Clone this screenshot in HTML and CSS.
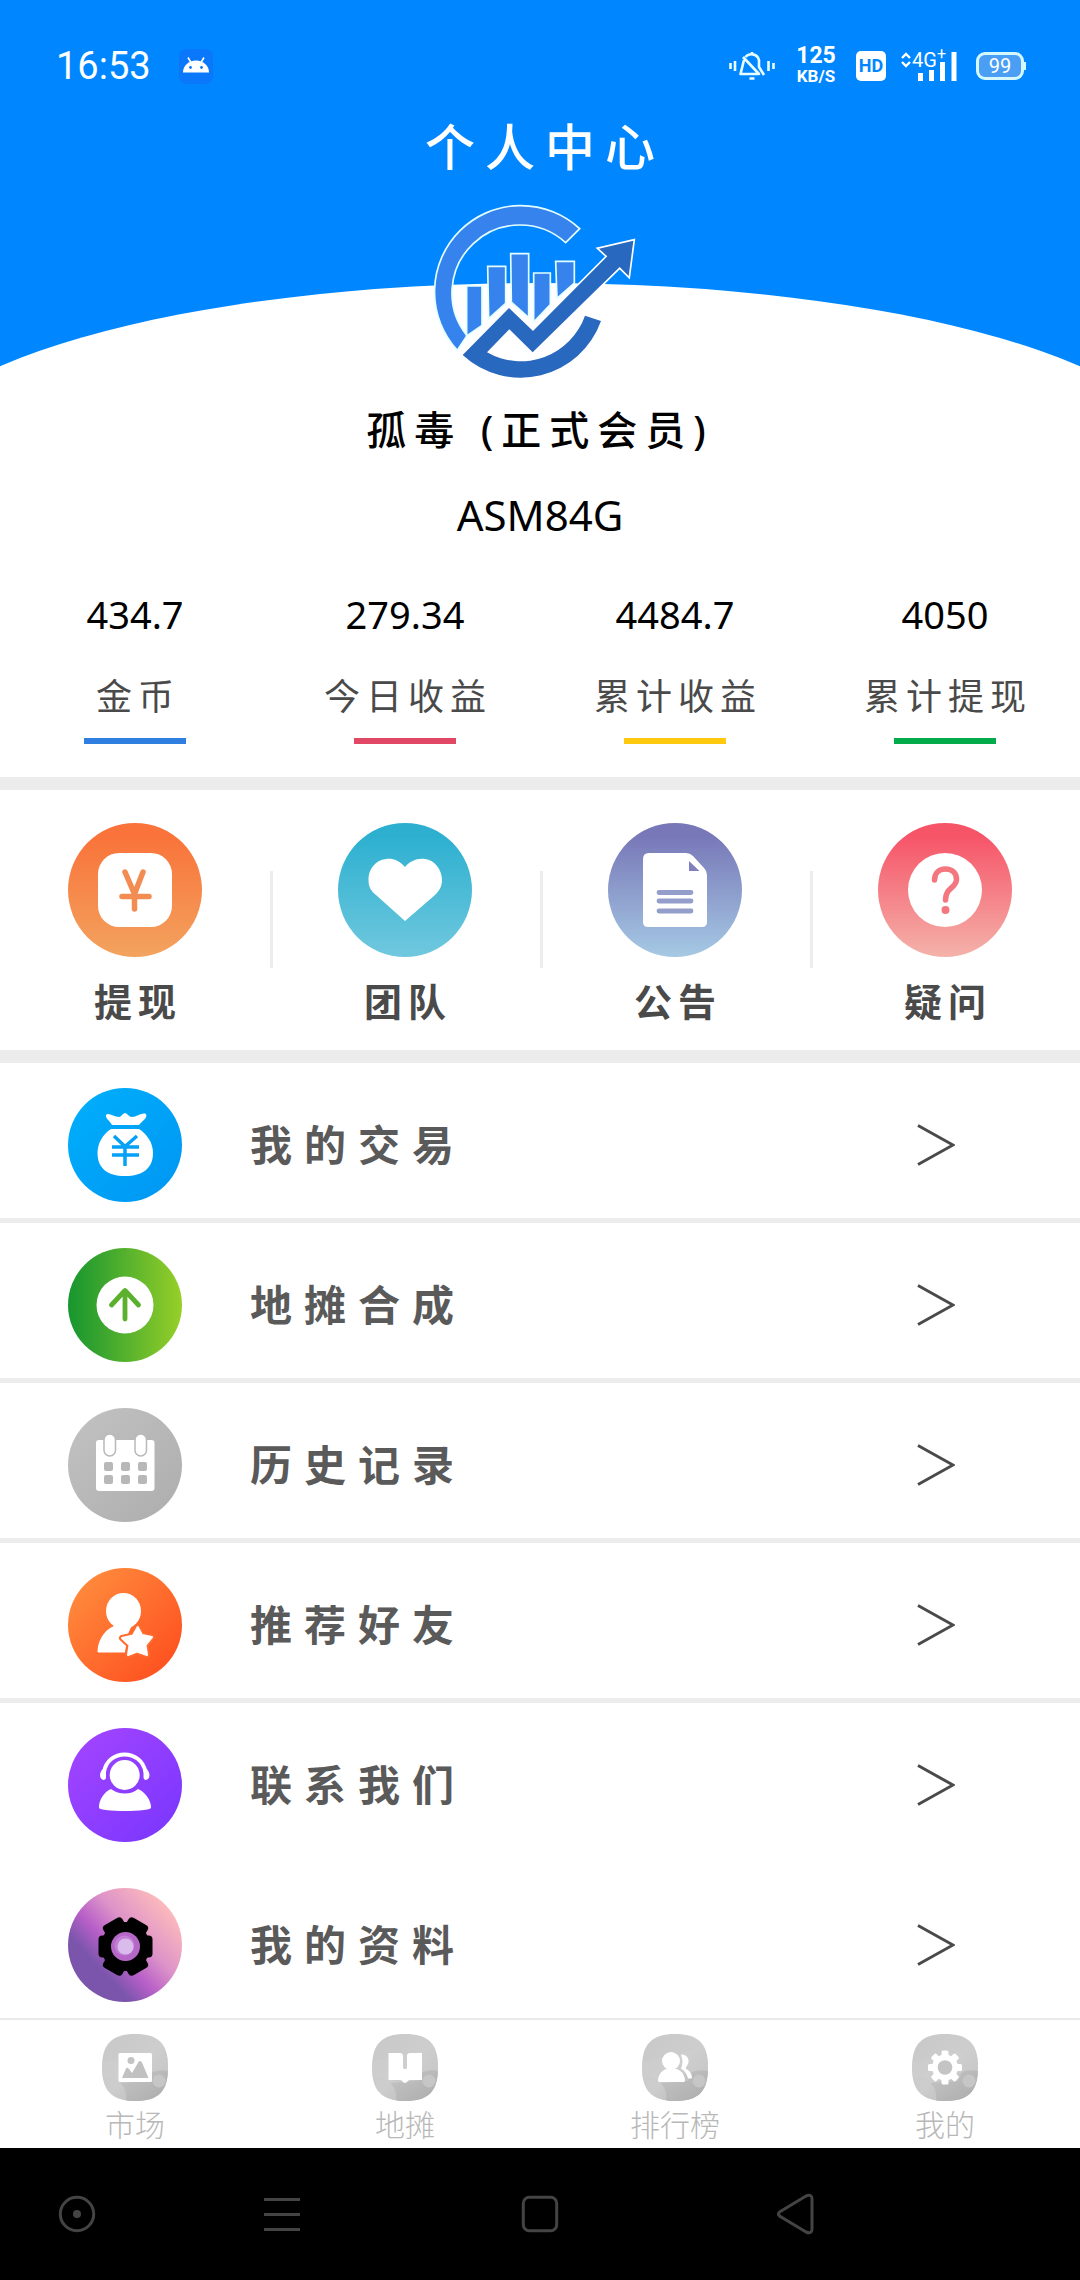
FILE: index.html
```html
<!DOCTYPE html>
<html lang="zh-CN">
<head>
  <meta charset="UTF-8">
  <meta name="viewport" content="width=device-width, initial-scale=1.0">
  <title>个人中心</title>
  <link rel="stylesheet" href="styles.css">
</head>
<body>

<!-- 公用渐变和底图 -->
<svg class="defs" aria-hidden="true">
  <defs>
    <linearGradient id="gOrange" x1="0" y1="0" x2="0" y2="1"><stop offset="0.1" stop-color="#f9733a"/><stop offset="1" stop-color="#f3a35f"/></linearGradient>
    <linearGradient id="gTeal" x1="0" y1="0" x2="0" y2="1"><stop offset="0.1" stop-color="#2db0d0"/><stop offset="1" stop-color="#70c8de"/></linearGradient>
    <linearGradient id="gViolet" x1="0" y1="0" x2="0" y2="1"><stop offset="0.1" stop-color="#7878b8"/><stop offset="1" stop-color="#a5c9e4"/></linearGradient>
    <linearGradient id="gRed" x1="0" y1="0" x2="0" y2="1"><stop offset="0.1" stop-color="#f65568"/><stop offset="1" stop-color="#f4b2aa"/></linearGradient>
    <linearGradient id="gBlue" x1="0" y1="0" x2="1" y2="1"><stop offset="0.1" stop-color="#00adfb"/><stop offset="0.9" stop-color="#0098f3"/></linearGradient>
    <linearGradient id="gGreen" x1="0" y1="0" x2="1" y2="0"><stop offset="0" stop-color="#17962f"/><stop offset="0.3" stop-color="#3aa52f"/><stop offset="1" stop-color="#97cf28"/></linearGradient>
    <linearGradient id="gGray" x1="0" y1="0" x2="1" y2="1"><stop offset="0.1" stop-color="#c0c0c0"/><stop offset="0.9" stop-color="#afafaf"/></linearGradient>
    <linearGradient id="gFriend" x1="0" y1="0" x2="1" y2="1"><stop offset="0.1" stop-color="#ff8b3d"/><stop offset="0.9" stop-color="#fe501f"/></linearGradient>
    <linearGradient id="gPurple" x1="0" y1="0" x2="1" y2="1"><stop offset="0.1" stop-color="#a044ff"/><stop offset="0.9" stop-color="#7d37fe"/></linearGradient>
    <linearGradient id="gProfile" x1="0.1" y1="0.85" x2="0.85" y2="0.15"><stop offset="0.22" stop-color="#7a55ab"/><stop offset="0.42" stop-color="#b75fc8"/><stop offset="0.65" stop-color="#dd93c8"/><stop offset="1" stop-color="#fcb9bc"/></linearGradient>
    <linearGradient id="gTab" x1="0" y1="0" x2="1" y2="1"><stop offset="0" stop-color="#c8c8c8"/><stop offset="0.5" stop-color="#cdcdcd"/><stop offset="1" stop-color="#b5b5b5"/></linearGradient>
    <linearGradient id="gTabDark" x1="0" y1="0" x2="1" y2="1"><stop offset="0" stop-color="#c6c6c6"/><stop offset="1" stop-color="#acacac"/></linearGradient>
    <clipPath id="tabClip"><path d="M33 0C56 0 66 9 66 33.500S56 67 33 67 0 57 0 33.500 10 0 33 0Z"/></clipPath>
    <symbol id="tabBg" viewBox="0 0 66 67">
      <g clip-path="url(#tabClip)">
        <rect width="66" height="67" fill="url(#gTab)"/>
        <path d="M0 44Q12 42 18 49L30 40H66V30L66 0Q60 16 36 20L0 28Z" fill="#cfcfcf" opacity=".5"/>
        <path d="M24 67C25 59 23 53 18 49L46 47 50 38Q58 35 66 37V67Z" fill="url(#gTabDark)"/>
        <circle cx="57" cy="47" r="6.500" fill="#c6c6c6"/>
      </g>
    </symbol>
  </defs>
</svg>

<header class="hero">
  <div class="status-bar">
    <span class="time">16:53</span>
    <svg class="android" viewBox="0 0 34 35" aria-hidden="true">
      <rect width="34" height="35" rx="7" fill="#0b78fb"/>
      <path d="M4 23.500a13 12 0 0 1 26 0Z" fill="#fff"/>
      <path d="M9 8.500l3 5M25 8.500l-3 5" stroke="#fff" stroke-width="1.600"/>
      <circle cx="11.500" cy="18.500" r="1.400" fill="#0b78fb"/><circle cx="22.500" cy="18.500" r="1.400" fill="#0b78fb"/>
    </svg>
    <svg class="mute" viewBox="0 0 46 32" fill="none" stroke="#e9ffff" stroke-width="2.600" aria-hidden="true">
      <path d="M1.500 13v6M6 11v10M39.500 11v10M44.500 13v6"/>
      <path d="M15 10L11.500 24H30L14 7M16.500 7C20 3 28 3 30 10V17L35 25M23 2v3M20.500 28.500h5" stroke-linejoin="round"/>
    </svg>
    <span class="speed"><b>125</b><b class="unit">KB/S</b></span>
    <span class="hd">HD</span>
    <span class="signal">
      <svg viewBox="0 0 58 32" aria-hidden="true">
        <path d="M2 8l4-4 4 4M2 12l4 4 4-4" fill="none" stroke="#fff" stroke-width="2.400"/>
        <path d="M20.500 23v8M31.500 20v11M42.500 12v19M54 2v29" stroke="#fff" stroke-width="5" stroke-linecap="butt"/>
      </svg>
      <span class="net">4G<sup>+</sup></span>
    </span>
    <span class="battery">99</span>
  </div>

  <h1 class="title">个人中心</h1>

  <svg class="logo" viewBox="90 60 660 549" role="img" aria-label="logo">
    <g fill="#3683ee" stroke="#e4ffff" stroke-width="5">
      <path d="M172 511A259 259 0 0 1 539 146L497 188A204 204 0 0 0 201 467Z"/>
      <path d="M200 318H246V436L200 468Z"/>
      <path d="M263 259H317V370L266 416Z"/>
      <path d="M332 221H386V413L334 366Z"/>
      <path d="M401 279H451V374L401 426Z"/>
      <path d="M467 244H523V309L471 355Z"/>
    </g>
    <path d="M188 525L327 384 399 453 622 229 597 206 700 182 686 288 659 261 398 517 328 448 261 517A204 204 0 0 0 555 407L603 423A256 256 0 0 1 188 525Z" fill="none" stroke="#fff" stroke-width="10"/>
    <path d="M188 525L327 384 399 453 622 229 597 206 700 182 686 288 659 261 398 517 328 448 261 517A204 204 0 0 0 555 407L603 423A256 256 0 0 1 188 525Z" fill="#2868bf"/>
  </svg>
</header>

<main>
  <section class="user">
    <p class="name">孤毒 (正式会员)</p>
    <p class="code">ASM84G</p>
  </section>

  <section class="stats">
    <div class="stat blue"><strong>434.7</strong><span>金币</span></div>
    <div class="stat red"><strong>279.34</strong><span>今日收益</span></div>
    <div class="stat yellow"><strong>4484.7</strong><span>累计收益</span></div>
    <div class="stat green"><strong>4050</strong><span>累计提现</span></div>
  </section>

  <section class="actions">
    <a class="action" href="#withdraw">
      <svg viewBox="0 0 134 134" aria-hidden="true">
        <circle cx="67" cy="67" r="67" fill="url(#gOrange)"/>
        <rect x="30" y="30" width="74" height="74" rx="21" fill="#fff"/>
        <path d="M57 49L66.500 71 75 49M66.500 71V86M54 73.500H81" fill="none" stroke="#f28c52" stroke-width="5.500" stroke-linecap="round" stroke-linejoin="round"/>
      </svg>
      <span>提现</span>
    </a>
    <a class="action" href="#team">
      <svg viewBox="0 0 134 134" aria-hidden="true">
        <circle cx="67" cy="67" r="67" fill="url(#gTeal)"/>
        <path d="M67 44C61 37 54 35 48 36 37 37 30 47 30.500 57 30.500 64 33 68 38 72L67 98 97 72C101 68 104 64 104 57 104 47 97 37 87 36 79 35 72 38 67 44Z" fill="#fff"/>
      </svg>
      <span>团队</span>
    </a>
    <a class="action" href="#notice">
      <svg viewBox="0 0 134 134" aria-hidden="true">
        <circle cx="67" cy="67" r="67" fill="url(#gViolet)"/>
        <path d="M41 30H78Q82 30 85 33L96 45Q99 48 99 52V99Q99 104 94 104H40Q35 104 35 99V36Q35 30 41 30Z" fill="#fff"/>
        <path d="M81 38V48H91.500Z" fill="#7f80bd"/>
        <path d="M51 69.500H83M51 78H83M51 88H83" stroke="#939ecb" stroke-width="4.800" stroke-linecap="round"/>
      </svg>
      <span>公告</span>
    </a>
    <a class="action" href="#question">
      <svg viewBox="0 0 134 134" aria-hidden="true">
        <circle cx="67" cy="67" r="67" fill="url(#gRed)"/>
        <circle cx="67" cy="67" r="37" fill="#fff"/>
        <path d="M56.500 57C56.500 50 61 46 67.500 46S78.500 50 78.500 56.500C78.500 65 67.500 64 67.500 77" fill="none" stroke="#f4777f" stroke-width="5.500" stroke-linecap="round"/>
        <circle cx="67.500" cy="87" r="4" fill="#f4777f"/>
      </svg>
      <span>疑问</span>
    </a>
  </section>

  <nav class="menu">
    <a class="menu-item" href="#trade">
      <svg class="menu-icon" viewBox="0 0 114 114" aria-hidden="true">
        <circle cx="57" cy="57" r="57" fill="url(#gBlue)"/>
        <path d="M44 37C42 33 37 30 38 27 40 24 46 29 51 29 53 29 55 25 57 25S61 29 64 29C69 29 74 24 78 26 80 30 74 33 71 37Z" fill="#fff"/>
        <path d="M43 41H71C79 46 85 55 85 65 85 80 75 88 57 88S29.500 80 29.500 65C29.500 55 35 46 43 41Z" fill="#fff"/>
        <path d="M46 48L57 58.500 69 48M57 58V78M44 59H71M44 67H71" fill="none" stroke="#05a1f6" stroke-width="3.500"/>
      </svg>
      <span>我的交易</span>
      <svg class="arrow" viewBox="0 0 38 42" aria-hidden="true"><path d="M1 1.500L36 21 1 40.500"/></svg>
    </a>
    <a class="menu-item" href="#compose">
      <svg class="menu-icon" viewBox="0 0 114 114" aria-hidden="true">
        <circle cx="57" cy="57" r="57" fill="url(#gGreen)"/>
        <circle cx="57" cy="57" r="28.500" fill="#fff"/>
        <path d="M57 43V71M43.500 57L57 42.500 70.500 57" fill="none" stroke="#5bb12e" stroke-width="4.800" stroke-linecap="round" stroke-linejoin="round"/>
      </svg>
      <span>地摊合成</span>
      <svg class="arrow" viewBox="0 0 38 42" aria-hidden="true"><path d="M1 1.500L36 21 1 40.500"/></svg>
    </a>
    <a class="menu-item" href="#history">
      <svg class="menu-icon" viewBox="0 0 114 114" aria-hidden="true">
        <circle cx="57" cy="57" r="57" fill="url(#gGray)"/>
        <rect x="28" y="32" width="58.500" height="51" rx="3" fill="#fff"/>
        <g fill="#fff" stroke="#b9b9b9" stroke-width="1.500"><rect x="36" y="26" width="11.500" height="22" rx="5.700"/><rect x="67" y="26" width="11.500" height="22" rx="5.700"/></g>
        <g fill="#b8b8b8">
          <rect x="36" y="54" width="9" height="9" rx="2"/><rect x="53" y="54" width="9" height="9" rx="2"/><rect x="70" y="54" width="9" height="9" rx="2"/>
          <rect x="36" y="67" width="9" height="9" rx="2"/><rect x="53" y="67" width="9" height="9" rx="2"/><rect x="70" y="67" width="9" height="9" rx="2"/>
        </g>
      </svg>
      <span>历史记录</span>
      <svg class="arrow" viewBox="0 0 38 42" aria-hidden="true"><path d="M1 1.500L36 21 1 40.500"/></svg>
    </a>
    <a class="menu-item" href="#invite">
      <svg class="menu-icon" viewBox="0 0 114 114" aria-hidden="true">
        <circle cx="57" cy="57" r="57" fill="url(#gFriend)"/>
        <ellipse cx="55.500" cy="43" rx="17.500" ry="18" fill="#fff"/>
        <path d="M46 58C35 63 30 73 29.500 83.500Q29.500 84.500 31 84.500H57L60 66 64 57Z" fill="#fff"/>
        <path d="M69.700 59L74 67 84 69 77.500 77 79 87 69 83.500 60 87 61.500 77 54 70 65 67.500Z" fill="#ff6a2d" stroke="#ff6a2d" stroke-width="6" stroke-linejoin="round"/>
        <path d="M69.700 59L74 67 84 69 77.500 77 79 87 69 83.500 60 87 61.500 77 54 70 65 67.500Z" fill="#fff" stroke="#fff" stroke-width="2" stroke-linejoin="round"/>
      </svg>
      <span>推荐好友</span>
      <svg class="arrow" viewBox="0 0 38 42" aria-hidden="true"><path d="M1 1.500L36 21 1 40.500"/></svg>
    </a>
    <a class="menu-item no-line" href="#contact">
      <svg class="menu-icon" viewBox="0 0 114 114" aria-hidden="true">
        <circle cx="57" cy="57" r="57" fill="url(#gPurple)"/>
        <circle cx="56.700" cy="47" r="15" fill="#fff"/>
        <path d="M36 44C40 20.500 73 20.500 77.500 44" fill="none" stroke="#fff" stroke-width="4"/>
        <path d="M38 38V49Q38 52 35.500 52 32 51 32 46.500 33 42 35 41ZM75.500 38V49Q75.500 52 78 52 81.500 51 81.500 46.500 80.500 42 78.500 41Z" fill="#fff"/>
        <path d="M43 61C36 64 31 72 31 79 31 81 33 81.500 38 82 50 83.300 64 83.300 76 82 81 81.500 83 81 83 79 83 72 77 64 70 61 63 67 51 67 43 61Z" fill="#fff"/>
      </svg>
      <span>联系我们</span>
      <svg class="arrow" viewBox="0 0 38 42" aria-hidden="true"><path d="M1 1.500L36 21 1 40.500"/></svg>
    </a>
    <a class="menu-item last" href="#profile">
      <svg class="menu-icon" viewBox="0 0 114 114" aria-hidden="true">
        <circle cx="57" cy="57" r="57" fill="url(#gProfile)"/>
        <g transform="translate(57.500 58.500)">
          <circle r="24.500"/>
          <rect x="-27" y="-11" width="54" height="22" rx="4"/>
          <rect x="-29" y="-11" width="58" height="22" rx="4" transform="rotate(60)"/>
          <rect x="-29" y="-11" width="58" height="22" rx="4" transform="rotate(120)"/>
          <circle r="14.500" fill="#b567c7"/>
          <circle cx="-1" cy="-1" r="10" fill="#c27fd3"/>
          <circle r="8" fill="#dabcec"/>
        </g>
      </svg>
      <span>我的资料</span>
      <svg class="arrow" viewBox="0 0 38 42" aria-hidden="true"><path d="M1 1.500L36 21 1 40.500"/></svg>
    </a>
  </nav>
</main>

<footer>
  <nav class="tabs">
    <a class="tab" href="#market">
      <svg viewBox="0 0 66 67" aria-hidden="true">
        <use href="#tabBg"/>
        <rect x="16.500" y="19" width="33.500" height="29" rx="1.500" fill="#fff"/>
        <circle cx="29" cy="26.500" r="3.500" fill="#c4c4c4"/>
        <path d="M20 44L24 34.500Q25.500 33 27 35L30 39 36.500 28Q38 26 40 28.500L46.500 44Z" fill="#c1c1c1"/>
      </svg>
      <span>市场</span>
    </a>
    <a class="tab" href="#stall">
      <svg viewBox="0 0 66 67" aria-hidden="true">
        <use href="#tabBg"/>
        <path d="M16.500 19H28Q31 19 31 22V33.500Q31 35 33 35T35 33.500V22Q35 19 38 19H50V46H38Q36 46 35 48 33 50 31 48 30 46 28 46H16.500Z" fill="#fff"/>
      </svg>
      <span>地摊</span>
    </a>
    <a class="tab" href="#rank">
      <svg viewBox="0 0 66 67" aria-hidden="true">
        <use href="#tabBg"/>
        <circle cx="29" cy="27" r="9" fill="#fff"/>
        <path d="M24 35H35C40 37 43 42 43 46.500Q43 48 41.500 48H17.500Q16 48 16 46.500C16 42 19 37 24 35Z" fill="#fff"/>
        <path d="M39 20.500C45 20 48 26 46 30 45 32 44 33 43.500 34.500 47 36 50 40 50 43.500Q50 44.500 49 44.500H46C45 40 43 37 39 34.500 41 30 41 26 39 20.500Z" fill="#fff"/>
      </svg>
      <span>排行榜</span>
    </a>
    <a class="tab" href="#mine">
      <svg viewBox="0 0 66 67" aria-hidden="true">
        <use href="#tabBg"/>
        <g transform="translate(33 33.500)" fill="#fff">
          <circle r="13"/>
          <rect x="-17" y="-3.500" width="34" height="7" rx="1.500"/>
          <rect x="-17" y="-3.500" width="34" height="7" rx="1.500" transform="rotate(45)"/>
          <rect x="-17" y="-3.500" width="34" height="7" rx="1.500" transform="rotate(90)"/>
          <rect x="-17" y="-3.500" width="34" height="7" rx="1.500" transform="rotate(135)"/>
          <circle r="7.300" fill="#c4c4c4"/>
        </g>
      </svg>
      <span>我的</span>
    </a>
  </nav>

  <!-- 系统导航键 -->
  <div class="sys-nav">
    <button type="button" aria-label="助手"><svg viewBox="0 0 40 40"><circle cx="20" cy="20" r="16.700"/><circle cx="20" cy="20" r="4" fill="#444" stroke="none"/></svg></button>
    <button type="button" aria-label="菜单"><svg viewBox="0 0 40 40"><path d="M2 5.500H38M2 20.500H38M2 35.500H38"/></svg></button>
    <button type="button" aria-label="主页"><svg viewBox="0 0 40 40"><rect x="3.300" y="3.300" width="33.400" height="33.400" rx="6"/></svg></button>
    <button type="button" aria-label="返回"><svg viewBox="0 0 40 40"><path d="M4.500 18L31 2Q37 -0.500 37 5V35Q37 40.500 31 38L4.500 22Q2.500 20 4.500 18Z"/></svg></button>
  </div>
</footer>

</body>
</html>
```
FILE: styles.css
```css
* {
  box-sizing: border-box;
}

html, body {
  margin: 0;
  padding: 0;
  background: #fff;
  font-family: "Noto Sans", "Noto Sans CJK SC", sans-serif;
}

body {
  display: flex;
  flex-direction: column;
  min-height: 100vh;
}

h1, p {
  margin: 0;
}

a {
  color: inherit;
  text-decoration: none;
}

svg {
  display: block;
  flex: none;
}

.defs {
  position: absolute;
  width: 0;
  height: 0;
}

/* 顶部蓝色区域 */
.hero {
  position: relative;
  overflow: hidden;
  padding-top: 48px;
  background: #0087ff;
  color: #fff;
}

.hero::after {
  content: "";
  position: absolute;
  top: 283px;
  left: -10%;
  width: 120%;
  height: 372px;
  border-radius: 50%;
  background: #fff;
}

.status-bar {
  display: flex;
  align-items: center;
  height: 36px;
  padding: 0 56px;
  font-family: Roboto, sans-serif;
}

.time {
  font-size: 38px;
  line-height: 40px;
}

.android {
  width: 34px;
  height: 35px;
  margin-left: 28px;
}

.mute {
  width: 46px;
  height: 32px;
  margin: 0 20px 0 auto;
}

.speed {
  display: flex;
  flex-direction: column;
  align-items: center;
  width: 42px;
  font-size: 23px;
  line-height: 20px;
}

.speed .unit {
  font-size: 17px;
}

.hd {
  width: 30px;
  height: 30px;
  margin-left: 19px;
  border-radius: 5px;
  background: #fff;
  color: #0087ff;
  font-size: 18px;
  font-weight: 700;
  line-height: 30px;
  text-align: center;
}

.signal {
  position: relative;
  margin-left: 14px;
}

.signal svg {
  width: 58px;
  height: 32px;
}

.net {
  position: absolute;
  top: 0;
  left: 12px;
  font-size: 20px;
  line-height: 20px;
}

.net sup {
  font-size: 16px;
  line-height: 0;
}

.battery {
  position: relative;
  width: 48px;
  height: 28px;
  margin-left: 18px;
  border: 3px solid #d5f8ff;
  border-radius: 9px;
  background: #4a9ff5;
  font-size: 20px;
  line-height: 22px;
  text-align: center;
}

.battery::after {
  content: "";
  position: absolute;
  top: 7px;
  right: -5px;
  width: 2px;
  height: 8px;
  background: #d5f8ff;
}

.title {
  margin-top: 30px;
  font-family: "Noto Sans CJK SC", sans-serif;
  font-size: 50px;
  font-weight: 500;
  line-height: 60px;
  letter-spacing: 10px;
  text-indent: 10px;
  text-align: center;
}

.logo {
  position: relative;
  z-index: 1;
  width: 220px;
  height: 183px;
  margin: 26px auto 0;
}

/* 用户信息 */
.user {
  padding-top: 17px;
  color: #000;
  line-height: 60px;
  text-align: center;
}

.name {
  font-size: 40px;
  font-weight: 500;
  letter-spacing: 8px;
}

.code {
  margin-top: 25px;
  font-size: 42px;
}

/* 收益数据 */
.stats {
  display: grid;
  grid-template-columns: repeat(4, 1fr);
  padding: 49px 0 33px;
  border-bottom: 13px solid #ececec;
}

.stat {
  display: flex;
  flex-direction: column;
  align-items: center;
  line-height: 40px;
}

.stat strong {
  color: #000;
  font-size: 38px;
  font-weight: 400;
}

.stat span {
  margin-top: 43px;
  color: #4a4a4a;
  font-size: 36px;
  letter-spacing: 6px;
  text-indent: 6px;
}

.stat::after {
  content: "";
  width: 102px;
  height: 6px;
  margin-top: 21px;
}

.stat.blue::after { background: #2f7fe0; }
.stat.red::after { background: #e04866; }
.stat.yellow::after { background: #fec90e; }
.stat.green::after { background: #04ab4b; }

/* 快捷入口 */
.actions {
  display: grid;
  grid-template-columns: repeat(4, 1fr);
  padding: 33px 0 29px;
  border-bottom: 13px solid #ececec;
}

.action {
  position: relative;
  display: flex;
  flex-direction: column;
  align-items: center;
  gap: 24px;
  color: #4a4a4a;
  font-size: 38px;
  font-weight: 700;
  line-height: 40px;
  letter-spacing: 6px;
  text-indent: 6px;
}

.action svg {
  width: 134px;
  height: 134px;
}

.action + .action::before {
  content: "";
  position: absolute;
  top: 48px;
  left: 0;
  width: 3px;
  height: 97px;
  background: #ededed;
}

/* 菜单列表 */
.menu-item {
  display: flex;
  align-items: center;
  gap: 68px;
  padding: 25px 125px 16px 68px;
  border-bottom: 5px solid #ececec;
  color: #5a5a5a;
  font-size: 42px;
  font-weight: 700;
  line-height: 56px;
  letter-spacing: 12px;
}

.menu-item.no-line {
  border-bottom-color: transparent;
}

.menu-item.last {
  border-bottom: 0;
}

.menu-icon {
  width: 114px;
  height: 114px;
}

.arrow {
  width: 38px;
  height: 42px;
  margin-left: auto;
  fill: none;
  stroke: #4a4a4a;
  stroke-width: 3;
}

/* 底部标签栏 */
.tabs {
  display: grid;
  grid-template-columns: repeat(4, 1fr);
  padding: 14px 0 7px;
  border-top: 2px solid #eaeaea;
  background: #fff;
}

.tab {
  display: flex;
  flex-direction: column;
  align-items: center;
  gap: 4px;
  color: #b8b8b8;
  font-family: "Noto Sans CJK SC", sans-serif;
  font-size: 30px;
  font-weight: 300;
  line-height: 36px;
}

.tab svg {
  width: 66px;
  height: 67px;
}

footer {
  display: flex;
  flex-direction: column;
  flex: 1;
}

.sys-nav {
  display: grid;
  grid-template-columns: 154fr 256fr 260fr 250fr 160fr;
  flex: 1;
  min-height: 132px;
  background: #000;
}

.sys-nav button {
  display: flex;
  align-items: center;
  justify-content: center;
  padding: 0;
  border: none;
  background: none;
  cursor: pointer;
}

.sys-nav svg {
  width: 40px;
  height: 40px;
  overflow: visible;
  fill: none;
  stroke: #444;
  stroke-width: 3;
}
```
